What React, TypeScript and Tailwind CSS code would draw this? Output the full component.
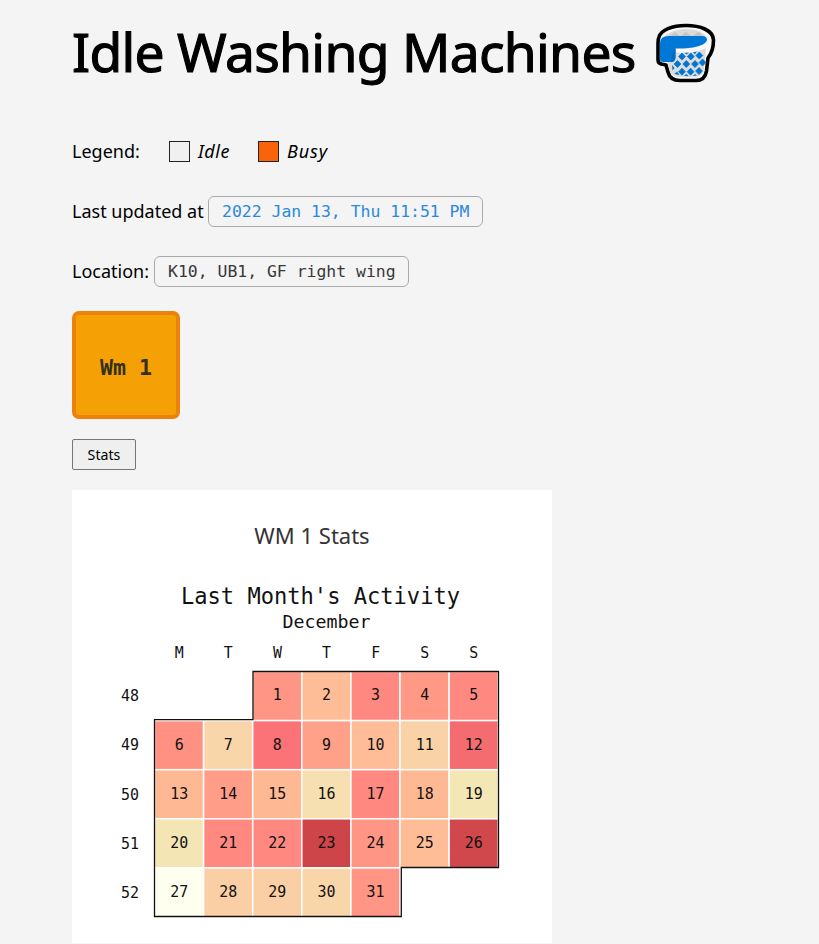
const SANS = "font-['Noto_Sans','Open_Sans',sans-serif]";
const MONO = "font-['DejaVu_Sans_Mono','Liberation_Mono',monospace]";

// Week number, first weekday column, and the [day, colour] cells of each week.
const weeks: { week: number; start: number; cells: [number, string][] }[] = [
  { week: 48, start: 2, cells: [[1, '#ff9585'], [2, '#ffbd97'], [3, '#ff8880'], [4, '#ff9986'], [5, '#ff8880']] },
  { week: 49, start: 0, cells: [[6, '#ff9183'], [7, '#f9d6a9'], [8, '#fb7377'], [9, '#ffa089'], [10, '#ffbd97'], [11, '#f9d3a7'], [12, '#f46c6f']] },
  { week: 50, start: 0, cells: [[13, '#ffb894'], [14, '#ff9d88'], [15, '#ffb894'], [16, '#f6e0b1'], [17, '#ff8880'], [18, '#ffb894'], [19, '#f4e7b6']] },
  { week: 51, start: 0, cells: [[20, '#f4e5b5'], [21, '#ff8880'], [22, '#ff8880'], [23, '#cd4548'], [24, '#ff9585'], [25, '#ffbd97'], [26, '#d0484b']] },
  { week: 52, start: 0, cells: [[27, '#fffff0'], [28, '#fbcfa5'], [29, '#fbcfa5'], [30, '#f9d6a9'], [31, '#ff9585']] },
];

const PITCH = 49.1;
const LEFT = 82.5;
const TOP = 101.5;

// Centres of the openings in the basket's weave.
const holes = [
  [26, 33.5], [34.8, 33.5], [43.3, 32.5],
  [21.5, 41], [30.3, 41], [39, 41], [46.5, 39.5],
  [26, 48.7], [34.6, 48.7], [43, 48],
];

function Basket() {
  return (
    <svg className="mt-[3px] h-[60px] w-[60px]" viewBox="0 0 60 60">
      <path d="M30 2.5C16 2.5 5 7 3 14Q2 16 2 20V37Q2 41 8 41.5L10 42L12 49Q14 57.5 24 57.5H40Q49 57.5 50.5 48L52 35Q57.500 28 57.500 17C57 7 44 2.500 30 2.500Z" fill="#fafafa" stroke="#000" strokeWidth="3.6" strokeLinejoin="round" />
      <path d="M8 14Q16 6 30 6Q46 6 51 15Z" fill="#dadada" />
      <path d="M14 13l5-4 5 4zM25 13l5-4.500 5 4.500zM37 13l5-4 5 4z" fill="#c6c6c6" />
      <path d="M11 38H19L20 29Q36 31 50 25L48 46Q47 54 38 54H24Q15 54 13.500 47Z" fill="#dcdcdc" />
      <path d="M28 29.500h5l-2.500 2zM37 29.300l4-1-2 3zM16 42l2.500 3-2 2.500zM18.500 51l2.500-2.500 2.500 3.500zM28 53l2.300-2 2.300 2zM37 53l2-2 2 1.500z" fill="#0075d1" />
      {holes.map(([x, y]) => (
        <path key={`${x}-${y}`} d={`M${x} ${y - 3.5}L${x + 3.4} ${y}L${x} ${y + 3.5}L${x - 3.4} ${y}Z`} fill="#0075d1" stroke="#0075d1" strokeWidth="0.8" strokeLinejoin="round" />
      ))}
      <path d="M20 25Q42 26 51 19L55 17Q55 22 47 26Q36 31 20 29Z" fill="#fafafa" />
      <path d="M4 20Q4 13 13 13H46Q51 13 51 17C50 23 35 25.500 24 25.500H19.500V34Q19.500 39 15 39H7Q4 39 4 36Z" fill="#0078d7" />
      <path d="M19.500 25.500V34Q19.500 39 15 39L17 28Z" fill="#006cc4" />
    </svg>
  );
}

function ActivityChart() {
  return (
    <svg className="block h-[383px] w-[480px] font-['DejaVu_Sans_Mono',monospace]" viewBox="0 0 480 383" fill="#111">
      <text x="109" y="34" fontSize="22.6" textLength="279" lengthAdjust="spacingAndGlyphs">Last Month's Activity</text>
      <text x="210.5" y="58" fontSize="18" textLength="88" lengthAdjust="spacingAndGlyphs">December</text>
      {['M', 'T', 'W', 'T', 'F', 'S', 'S'].map((d, i) => (
        <text key={i} x={LEFT + PITCH * (i + 0.5) - 4.3} y="88" fontSize="16.4" textLength="9" lengthAdjust="spacingAndGlyphs">{d}</text>
      ))}
      {weeks.map((row, r) => (
        <g key={row.week}>
          <text x="49" y={131.3 + PITCH * r} fontSize="16.6" textLength="18" lengthAdjust="spacingAndGlyphs">{row.week}</text>
          {row.cells.map(([day, fill], c) => {
            const x = LEFT + PITCH * (row.start + c);
            const y = TOP + PITCH * r;
            const width = day < 10 ? 9 : 18;
            return (
              <g key={day}>
                <rect x={x} y={y} width={PITCH} height={PITCH} fill={fill} stroke="#fff" strokeWidth="1.5" />
                <text x={x + PITCH / 2 - width / 2 + 0.1} y={y + 28.9} fontSize="16.6" textLength={width} lengthAdjust="spacingAndGlyphs">{day}</text>
              </g>
            );
          })}
        </g>
      ))}
      <path d="M181 101.5H426.5V297.5H329.3V346.5H82.5V149.7H181Z" fill="none" stroke="#111" strokeWidth="1.3" />
    </svg>
  );
}

export default function App() {
  return (
    <div className={`h-[944px] w-[819px] overflow-hidden bg-[#f4f4f4] pl-[72px] text-black ${SANS}`}>
      <header className="flex h-[121px] items-start gap-[21px] pt-5">
        <h1 className="w-[563px] text-[53.4px] leading-[63px] font-normal tracking-[-0.72px] whitespace-nowrap [-webkit-text-stroke:1.1px_black]">Idle Washing Machines</h1>
        <Basket />
      </header>
      <section className="flex h-[60px] items-center text-[18px]">
        <span className="w-[97px]">Legend:</span>
        <span className="mr-2 size-[21px] border-[1.5px] border-[#222] bg-[#f0f0f0]" />
        <span className="w-[60px] tracking-[0.5px] italic">Idle</span>
        <span className="mr-2 size-[21px] border-[1.5px] border-[#222] bg-[#f9640b]" />
        <span className="tracking-[0.9px] italic">Busy</span>
      </section>
      <section className="flex h-[60px] items-center gap-[5px] text-[18px]">
        <span className="w-[131px] whitespace-nowrap">Last updated at</span>
        <span className={`flex h-[31px] w-[275px] items-center rounded-md border border-[#aaa] pt-0.5 pl-[13px] text-[16.45px] whitespace-nowrap text-[#2989dd] ${MONO}`}>2022 Jan 13, Thu 11:51 PM</span>
      </section>
      <section className="flex h-[60px] items-center gap-[5px] text-[18px]">
        <span className="w-[77px]">Location:</span>
        <span className={`flex h-[31px] w-[255px] items-center rounded-md border border-[#aaa] pt-0.5 pl-[13px] text-[16.45px] whitespace-nowrap text-[#383838] ${MONO}`}>K10, UB1, GF right wing</span>
      </section>
      <div className={`mt-[10px] flex size-[108px] items-center justify-center rounded-[7px] border-4 border-[#ec820b] bg-[#f5a106] pt-[6px] text-[21.6px] font-bold text-[#33301d] ${MONO}`}>Wm 1</div>
      <button className="mt-5 block h-[31px] w-16 rounded-[2px] border border-[#767676] bg-[#efefef] text-[14.2px]">Stats</button>
      <section className="mt-5 h-[453px] w-[480px] bg-white">
        <h2 className="h-20 pt-[29px] text-center text-[22px] leading-[32px] text-[#333]">WM 1 Stats</h2>
        <ActivityChart />
      </section>
    </div>
  );
}
